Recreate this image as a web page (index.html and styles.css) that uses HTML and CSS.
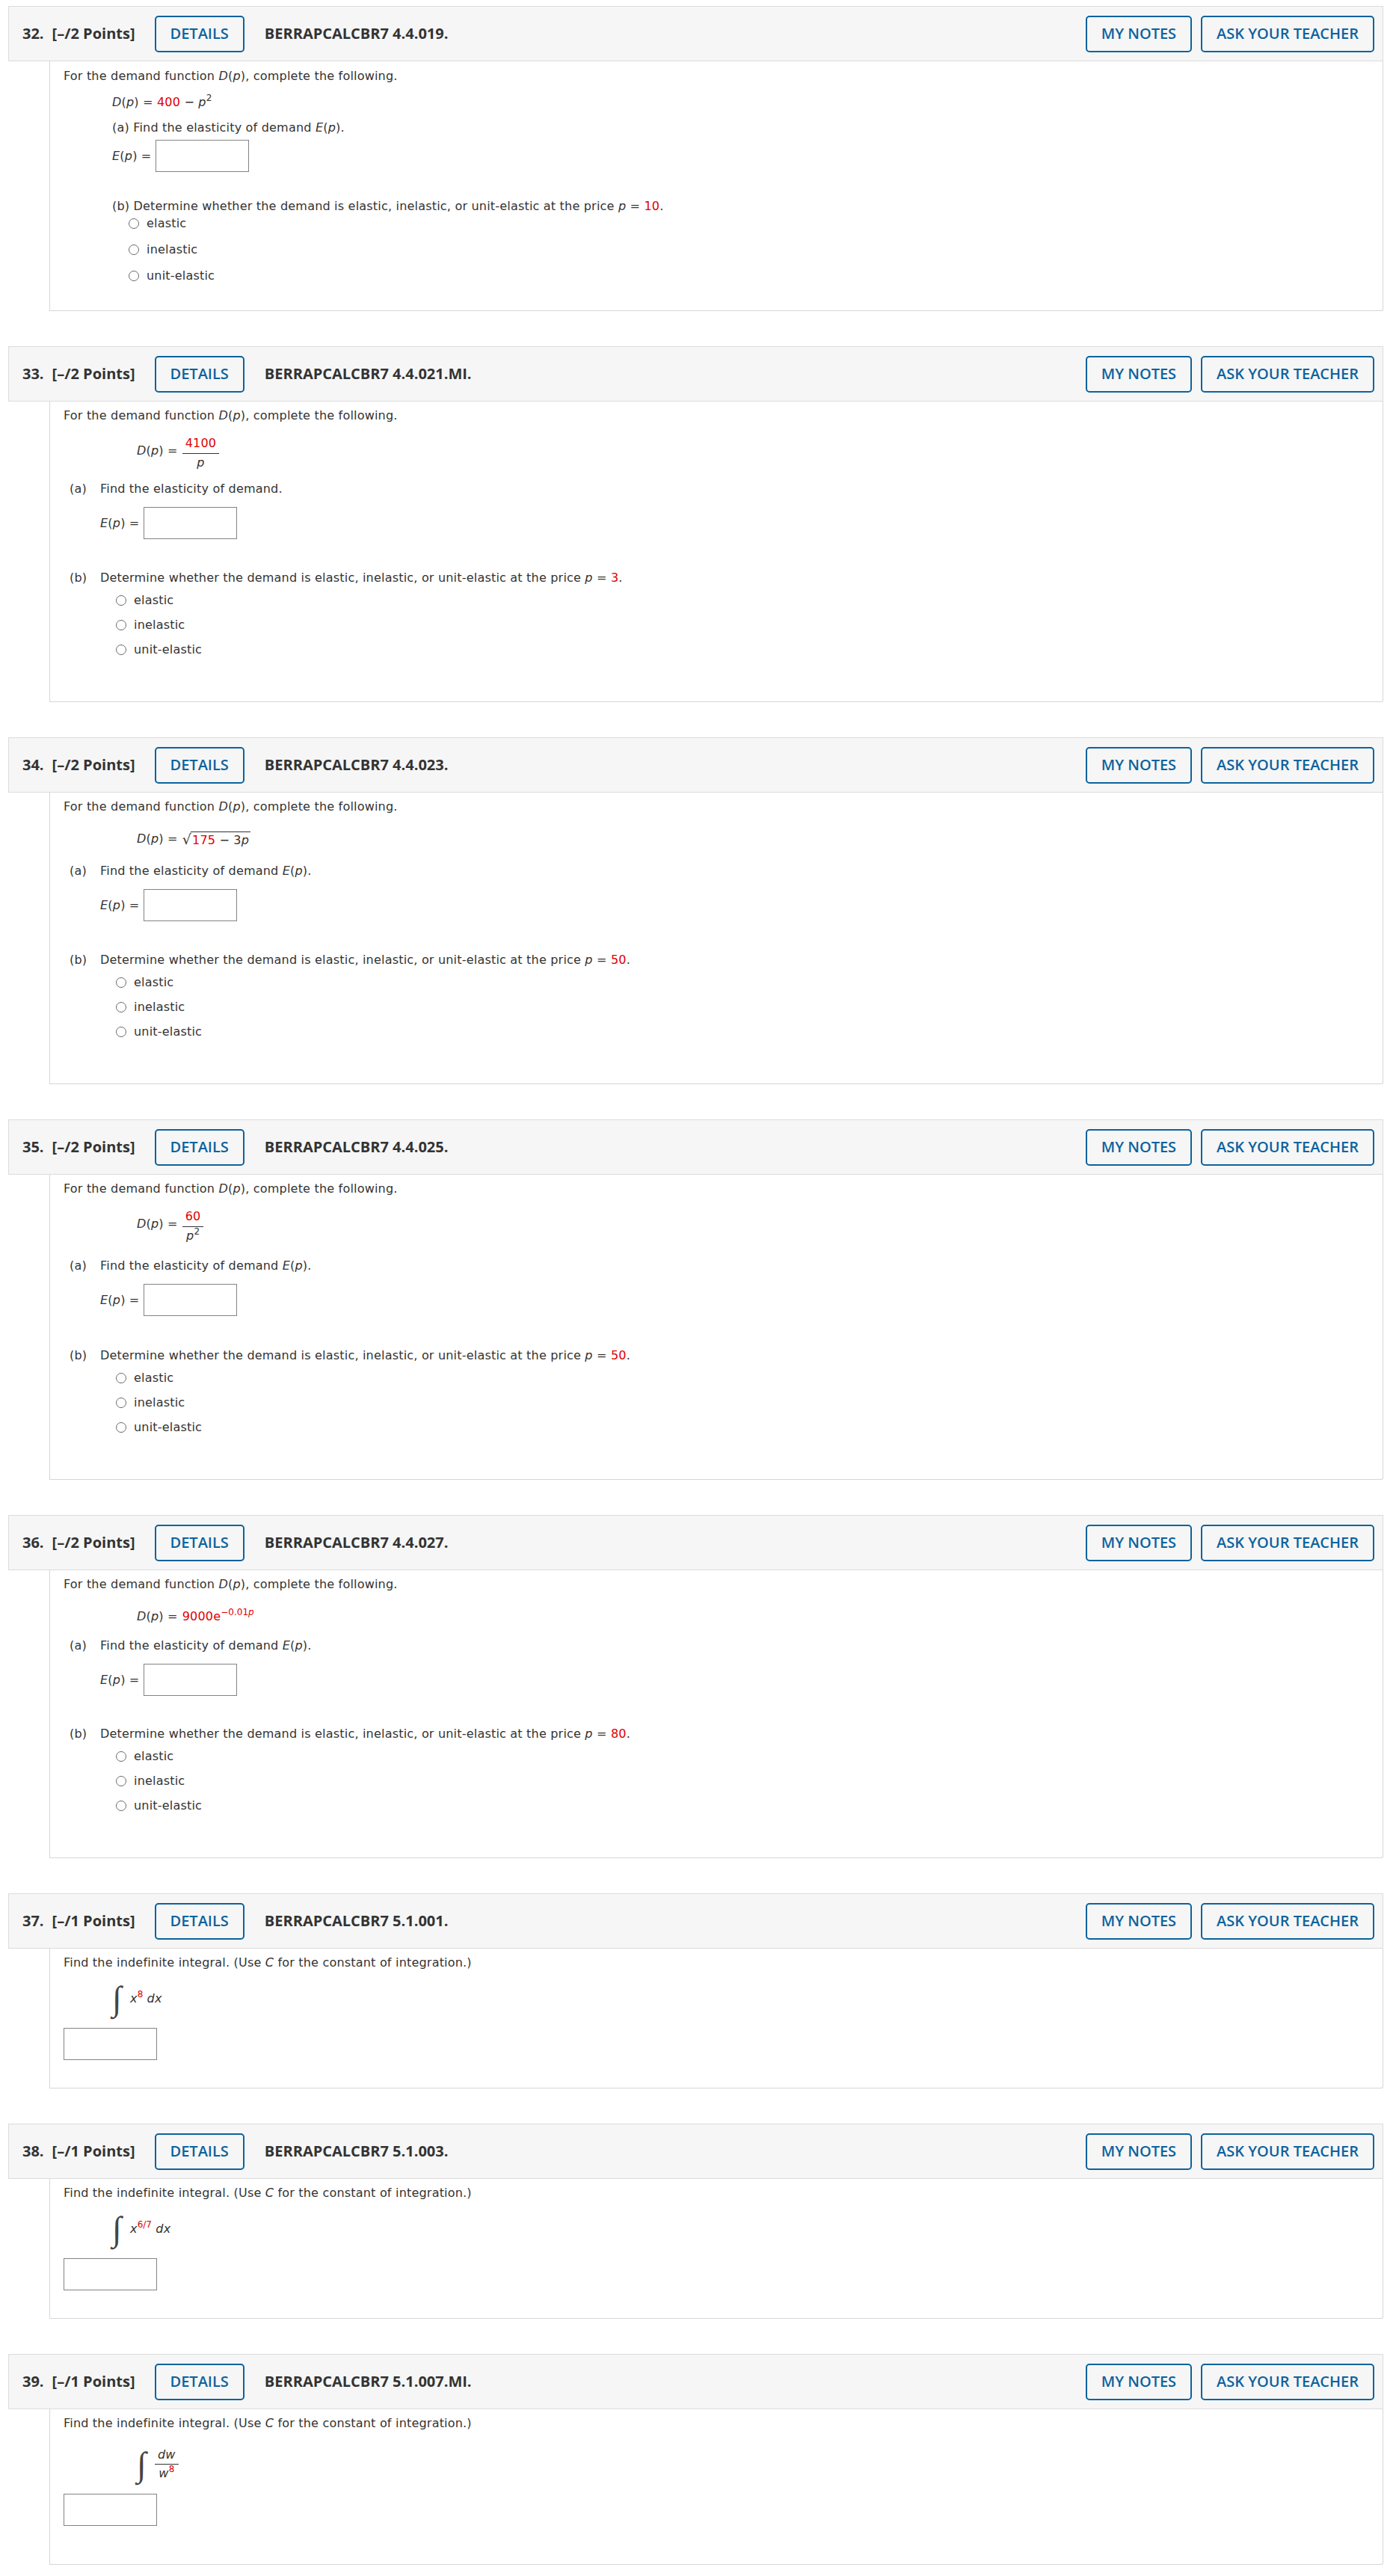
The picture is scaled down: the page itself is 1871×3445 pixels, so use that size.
FILE: index.html
```html
<!DOCTYPE html>
<html lang="en">
<head>
<meta charset="utf-8">
<title>Assignment</title>
<link rel="stylesheet" href="styles.css">
</head>
<body>
<div class="page">

<section class="question">
  <header class="q-head">
    <span class="q-title"><span class="q-num">32.</span>[–/2 Points]</span>
    <span class="btn">DETAILS</span>
    <span class="q-code">BERRAPCALCBR7 4.4.019.</span>
    <div class="q-actions"><span class="btn">MY NOTES</span><span class="btn">ASK YOUR TEACHER</span></div>
  </header>
  <div class="q-body q32">
    <p class="intro">For the demand function <i>D</i>(<i>p</i>), complete the following.</p>
    <div class="indent">
      <p class="eq"><i>D</i>(<i>p</i>) = <span class="r">400</span> − <i>p</i><span class="sup">2</span></p>
      <p class="qa">(a) Find the elasticity of demand <i>E</i>(<i>p</i>).</p>
      <div class="answer"><span><i>E</i>(<i>p</i>) =</span><span class="box"></span></div>
      <p class="qb">(b) Determine whether the demand is elastic, inelastic, or unit-elastic at the price <i>p</i> = <span class="r">10</span>.</p>
      <div class="choices">
        <div class="choice"><span class="radio"></span>elastic</div>
        <div class="choice"><span class="radio"></span>inelastic</div>
        <div class="choice"><span class="radio"></span>unit-elastic</div>
      </div>
    </div>
  </div>
</section>

<section class="question">
  <header class="q-head">
    <span class="q-title"><span class="q-num">33.</span>[–/2 Points]</span>
    <span class="btn">DETAILS</span>
    <span class="q-code">BERRAPCALCBR7 4.4.021.MI.</span>
    <div class="q-actions"><span class="btn">MY NOTES</span><span class="btn">ASK YOUR TEACHER</span></div>
  </header>
  <div class="q-body std">
    <p class="intro">For the demand function <i>D</i>(<i>p</i>), complete the following.</p>
    <div class="eq frac-row"><span class="lhs"><i>D</i>(<i>p</i>) =</span><span class="frac"><span class="num r">4100</span><span class="den"><i>p</i></span></span></div>
    <div class="part part-a">
      <span class="lbl">(a)</span>
      <div class="pc">
        <p>Find the elasticity of demand.</p>
        <div class="answer"><span><i>E</i>(<i>p</i>) =</span><span class="box"></span></div>
      </div>
    </div>
    <div class="part part-b">
      <span class="lbl">(b)</span>
      <div class="pc">
        <p>Determine whether the demand is elastic, inelastic, or unit-elastic at the price <i>p</i> = <span class="r">3</span>.</p>
        <div class="choices">
          <div class="choice"><span class="radio"></span>elastic</div>
          <div class="choice"><span class="radio"></span>inelastic</div>
          <div class="choice"><span class="radio"></span>unit-elastic</div>
        </div>
      </div>
    </div>
  </div>
</section>

<section class="question">
  <header class="q-head">
    <span class="q-title"><span class="q-num">34.</span>[–/2 Points]</span>
    <span class="btn">DETAILS</span>
    <span class="q-code">BERRAPCALCBR7 4.4.023.</span>
    <div class="q-actions"><span class="btn">MY NOTES</span><span class="btn">ASK YOUR TEACHER</span></div>
  </header>
  <div class="q-body std">
    <p class="intro">For the demand function <i>D</i>(<i>p</i>), complete the following.</p>
    <div class="eq"><span class="lhs"><i>D</i>(<i>p</i>) =</span><span class="sqrt"><span class="rad-sign">√</span><span class="radicand"><span class="r">175</span> − 3<i>p</i></span></span></div>
    <div class="part part-a">
      <span class="lbl">(a)</span>
      <div class="pc">
        <p>Find the elasticity of demand <i>E</i>(<i>p</i>).</p>
        <div class="answer"><span><i>E</i>(<i>p</i>) =</span><span class="box"></span></div>
      </div>
    </div>
    <div class="part part-b">
      <span class="lbl">(b)</span>
      <div class="pc">
        <p>Determine whether the demand is elastic, inelastic, or unit-elastic at the price <i>p</i> = <span class="r">50</span>.</p>
        <div class="choices">
          <div class="choice"><span class="radio"></span>elastic</div>
          <div class="choice"><span class="radio"></span>inelastic</div>
          <div class="choice"><span class="radio"></span>unit-elastic</div>
        </div>
      </div>
    </div>
  </div>
</section>

<section class="question">
  <header class="q-head">
    <span class="q-title"><span class="q-num">35.</span>[–/2 Points]</span>
    <span class="btn">DETAILS</span>
    <span class="q-code">BERRAPCALCBR7 4.4.025.</span>
    <div class="q-actions"><span class="btn">MY NOTES</span><span class="btn">ASK YOUR TEACHER</span></div>
  </header>
  <div class="q-body std q35">
    <p class="intro">For the demand function <i>D</i>(<i>p</i>), complete the following.</p>
    <div class="eq frac-row"><span class="lhs"><i>D</i>(<i>p</i>) =</span><span class="frac"><span class="num r">60</span><span class="den"><i>p</i><span class="sup">2</span></span></span></div>
    <div class="part part-a">
      <span class="lbl">(a)</span>
      <div class="pc">
        <p>Find the elasticity of demand <i>E</i>(<i>p</i>).</p>
        <div class="answer"><span><i>E</i>(<i>p</i>) =</span><span class="box"></span></div>
      </div>
    </div>
    <div class="part part-b">
      <span class="lbl">(b)</span>
      <div class="pc">
        <p>Determine whether the demand is elastic, inelastic, or unit-elastic at the price <i>p</i> = <span class="r">50</span>.</p>
        <div class="choices">
          <div class="choice"><span class="radio"></span>elastic</div>
          <div class="choice"><span class="radio"></span>inelastic</div>
          <div class="choice"><span class="radio"></span>unit-elastic</div>
        </div>
      </div>
    </div>
  </div>
</section>

<section class="question">
  <header class="q-head">
    <span class="q-title"><span class="q-num">36.</span>[–/2 Points]</span>
    <span class="btn">DETAILS</span>
    <span class="q-code">BERRAPCALCBR7 4.4.027.</span>
    <div class="q-actions"><span class="btn">MY NOTES</span><span class="btn">ASK YOUR TEACHER</span></div>
  </header>
  <div class="q-body std q36">
    <p class="intro">For the demand function <i>D</i>(<i>p</i>), complete the following.</p>
    <div class="eq"><span class="lhs"><i>D</i>(<i>p</i>) =</span><span class="r">9000e<span class="sup">−0.01<i>p</i></span></span></div>
    <div class="part part-a">
      <span class="lbl">(a)</span>
      <div class="pc">
        <p>Find the elasticity of demand <i>E</i>(<i>p</i>).</p>
        <div class="answer"><span><i>E</i>(<i>p</i>) =</span><span class="box"></span></div>
      </div>
    </div>
    <div class="part part-b">
      <span class="lbl">(b)</span>
      <div class="pc">
        <p>Determine whether the demand is elastic, inelastic, or unit-elastic at the price <i>p</i> = <span class="r">80</span>.</p>
        <div class="choices">
          <div class="choice"><span class="radio"></span>elastic</div>
          <div class="choice"><span class="radio"></span>inelastic</div>
          <div class="choice"><span class="radio"></span>unit-elastic</div>
        </div>
      </div>
    </div>
  </div>
</section>

<section class="question">
  <header class="q-head">
    <span class="q-title"><span class="q-num">37.</span>[–/1 Points]</span>
    <span class="btn">DETAILS</span>
    <span class="q-code">BERRAPCALCBR7 5.1.001.</span>
    <div class="q-actions"><span class="btn">MY NOTES</span><span class="btn">ASK YOUR TEACHER</span></div>
  </header>
  <div class="q-body integ">
    <p class="intro">Find the indefinite integral. (Use <i>C</i> for the constant of integration.)</p>
    <div class="int-row"><span class="intg">∫</span><span class="int-expr"><i>x</i><span class="sup r">8</span> <i>dx</i></span></div>
    <span class="box"></span>
  </div>
</section>

<section class="question">
  <header class="q-head">
    <span class="q-title"><span class="q-num">38.</span>[–/1 Points]</span>
    <span class="btn">DETAILS</span>
    <span class="q-code">BERRAPCALCBR7 5.1.003.</span>
    <div class="q-actions"><span class="btn">MY NOTES</span><span class="btn">ASK YOUR TEACHER</span></div>
  </header>
  <div class="q-body integ">
    <p class="intro">Find the indefinite integral. (Use <i>C</i> for the constant of integration.)</p>
    <div class="int-row"><span class="intg">∫</span><span class="int-expr"><i>x</i><span class="sup r">6/7</span> <i>dx</i></span></div>
    <span class="box"></span>
  </div>
</section>

<section class="question">
  <header class="q-head">
    <span class="q-title"><span class="q-num">39.</span>[–/1 Points]</span>
    <span class="btn">DETAILS</span>
    <span class="q-code">BERRAPCALCBR7 5.1.007.MI.</span>
    <div class="q-actions"><span class="btn">MY NOTES</span><span class="btn">ASK YOUR TEACHER</span></div>
  </header>
  <div class="q-body integ q39">
    <p class="intro">Find the indefinite integral. (Use <i>C</i> for the constant of integration.)</p>
    <div class="int-row"><span class="intg">∫</span><span class="frac"><span class="num"><i>dw</i></span><span class="den"><i>w</i><span class="sup r">8</span></span></span></div>
    <span class="box"></span>
  </div>
</section>

</div>
</body>
</html>
```

FILE: styles.css
```css
* { box-sizing: border-box; }
html, body { margin: 0; padding: 0; background: #fff; }
body {
  color: #333;
  font-family: "DejaVu Sans", Verdana, sans-serif;
  font-size: 16px;
  line-height: 20px;
}
p { margin: 0; }
i { font-style: italic; }

.page { padding: 8px 21px 1px 11px; }
.question + .question { margin-top: 47px; }

/* header bar */
.q-head {
  display: flex;
  align-items: center;
  height: 74px;
  padding: 0 11px 0 18px;
  background: #f6f6f6;
  border: 1px solid #dcdcdc;
  font-family: "Open Sans", sans-serif;
  font-size: 20px;
  color: #333;
}
.q-title { font-weight: 700; white-space: nowrap; }
.q-num { margin-right: 11px; }
.q-code { margin-left: 27px; font-weight: 700; white-space: nowrap; }
.btn {
  display: inline-flex;
  align-items: center;
  height: 49px;
  padding: 0 19px;
  border: 2px solid #0b639e;
  border-radius: 5px;
  color: #0b639e;
  font-weight: 600;
  white-space: nowrap;
}
.q-head > .btn { margin-left: 26px; }
.q-actions { margin-left: auto; display: flex; gap: 12px; }

/* body box */
.q-body {
  margin-left: 55px;
  border: 1px solid #d6d6d6;
  border-top: 0;
  border-bottom-right-radius: 3px;
  padding: 9px 18px 36px;
  letter-spacing: 0.2px;
}
.r { color: #e00000; }
.sup { font-size: 12px; line-height: 0; vertical-align: 7px; letter-spacing: 0; }

.box {
  display: block;
  width: 125px;
  height: 43px;
  border: 1px solid #838383;
  background: #fff;
}
.answer { display: flex; align-items: center; gap: 6px; }

.choices { display: flex; flex-direction: column; }
.choice { display: flex; align-items: center; }
.radio {
  width: 14px;
  height: 14px;
  border: 1px solid #6a6a6a;
  border-radius: 50%;
  background: #fff;
  margin-right: 10px;
}

/* question 32 layout */
.q32 { padding-top: 10px; }
.q32 .indent { margin-left: 65px; }
.q32 .eq { margin-top: 15px; }
.q32 .qa { margin-top: 14px; }
.q32 .answer { margin-top: 6px; }
.q32 .qb { margin-top: 36px; }
.q32 .choices { margin-top: 3px; margin-left: 22px; gap: 15px; }

/* standard two-part layout */
.std { padding-bottom: 59px; }
.std .eq {
  display: flex;
  align-items: center;
  margin-left: 98px;
  margin-top: 23px;
  height: 20px;
}
.std .eq.frac-row { margin-top: 17px; height: 46px; }
.lhs { margin-right: 6px; }
.frac-row .lhs { margin-bottom: 6px; }
.frac {
  display: inline-flex;
  flex-direction: column;
  align-items: center;
}
.frac .num { padding: 0 4px 3px; line-height: 20px; }
.frac .den { border-top: 1px solid #333; padding: 2px 4px 0; line-height: 20px; align-self: stretch; text-align: center; }

.part { display: grid; grid-template-columns: 41px auto; margin-left: 8px; }
.part-a { margin-top: 23px; }
.frac-row + .part-a { margin-top: 15px; }
.part-b { margin-top: 42px; }
.std .answer { margin-top: 14px; }
.std .choices { margin-top: 10px; margin-left: 21px; gap: 13px; }

.q35 .frac-row + .part-a { margin-top: 20px; }
.q35 .part-b { margin-top: 43px; }
.q36 .part-a { margin-top: 19px; }
.q36 .part-b { margin-top: 41px; }

.sqrt { display: inline-flex; align-items: flex-end; }
.rad-sign { font-size: 19px; line-height: 22px; margin-right: -1px; }
.radicand { border-top: 1px solid #333; padding: 1px 2px 0 2px; line-height: 19px; }

/* integral questions */
.integ { padding-bottom: 37px; }
.int-row {
  display: flex;
  align-items: center;
  margin-top: 15px;
  margin-left: 65px;
  height: 45px;
}
.intg {
  font-family: "Liberation Serif", serif;
  font-size: 46px;
  line-height: 45px;
  width: 18px;
  margin-right: 6px;
  color: #444;
}
.int-expr { line-height: 20px; }
.integ .box { margin-top: 17px; }
.q39 { padding-bottom: 51px; }
.q39 .int-row { margin-left: 98px; margin-top: 21px; height: 47px; }
.q39 .box { margin-top: 16px; }
.q39 .frac .num { padding-bottom: 2px; }
```
